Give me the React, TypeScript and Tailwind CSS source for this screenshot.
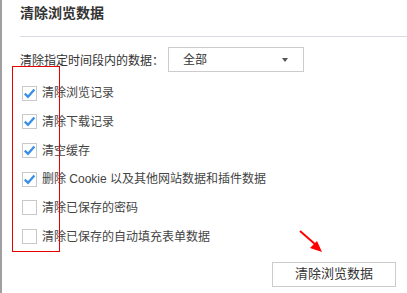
import React from 'react';

const FONT = '"Liberation Sans", "Noto Sans CJK SC", sans-serif';

const items: { label: string; checked: boolean }[] = [
  { label: '清除浏览记录', checked: true },
  { label: '清除下载记录', checked: true },
  { label: '清空缓存', checked: true },
  { label: '删除 Cookie 以及其他网站数据和插件数据', checked: true },
  { label: '清除已保存的密码', checked: false },
  { label: '清除已保存的自动填充表单数据', checked: false },
];

const CheckBox: React.FC<{ checked: boolean }> = ({ checked }) => (
  <span className="w-[15px] h-[15px] border border-[#c9c9c9] bg-white flex items-center justify-center shrink-0">
    {checked && (
      <svg width="13" height="13" viewBox="0 0 13 13">
        <path d="M1.8 6.6 L5 9.8 L11.4 2.6" fill="none" stroke="#3a8ee6" strokeWidth="2.3" />
      </svg>
    )}
  </span>
);

export default function App() {
  return (
    <div
      className="relative w-[407px] h-[293px] bg-white border-l-2 border-[#a0a0a0] overflow-hidden text-[#333]"
      style={{ fontFamily: FONT }}
    >
      <div className="pl-[18px]">
        {/* Title */}
        <div className="pt-[3px] text-[14px] leading-[20px] font-semibold text-[#333]">清除浏览数据</div>
        <div className="mt-[13px] h-px bg-[#d8dbe2]" />

        {/* Time range */}
        <div className="mt-[10px] flex items-center h-[25px]">
          <span className="text-[12px] leading-[16px] pt-[3px] w-[148px] text-[#333]">清除指定时间段内的数据：</span>
          <div className="w-[136px] h-[25px] border border-[#cccccc] flex items-center justify-between pl-[14px] pr-[15px]">
            <span className="text-[12px] leading-[16px] text-[#333]">全部</span>
            <span className="w-0 h-0 border-l-[3.5px] border-r-[3.5px] border-t-[4px] border-l-transparent border-r-transparent border-t-[#555]" />
          </div>
        </div>

        {/* Options */}
        <div className="mt-[7px] flex flex-col">
          {items.map((it, i) => (
            <div key={i} className="h-[28.67px] flex items-center gap-[5px] pl-[2px]">
              <CheckBox checked={it.checked} />
              <span className="text-[12px] leading-[16px] text-[#444]">{it.label}</span>
            </div>
          ))}
        </div>

        {/* Action */}
        <div className="mt-[11px] flex justify-end pr-[11px]">
          <button className="w-[124px] h-[25px] border border-[#cccccc] bg-white text-[13px] leading-[16px] text-[#333] flex items-center justify-center">
            清除浏览数据
          </button>
        </div>
      </div>

      {/* Annotations */}
      <div className="absolute left-[10px] top-[66px] w-[48px] h-[186px] border border-[#e60000]" />
      <svg className="absolute left-[294px] top-[228px]" width="30" height="28" viewBox="0 0 30 28">
        <line x1="4" y1="3" x2="20" y2="17" stroke="#ff0000" strokeWidth="2" />
        <polygon points="26,24 14,20 21,13" fill="#ff0000" />
      </svg>
    </div>
  );
}
